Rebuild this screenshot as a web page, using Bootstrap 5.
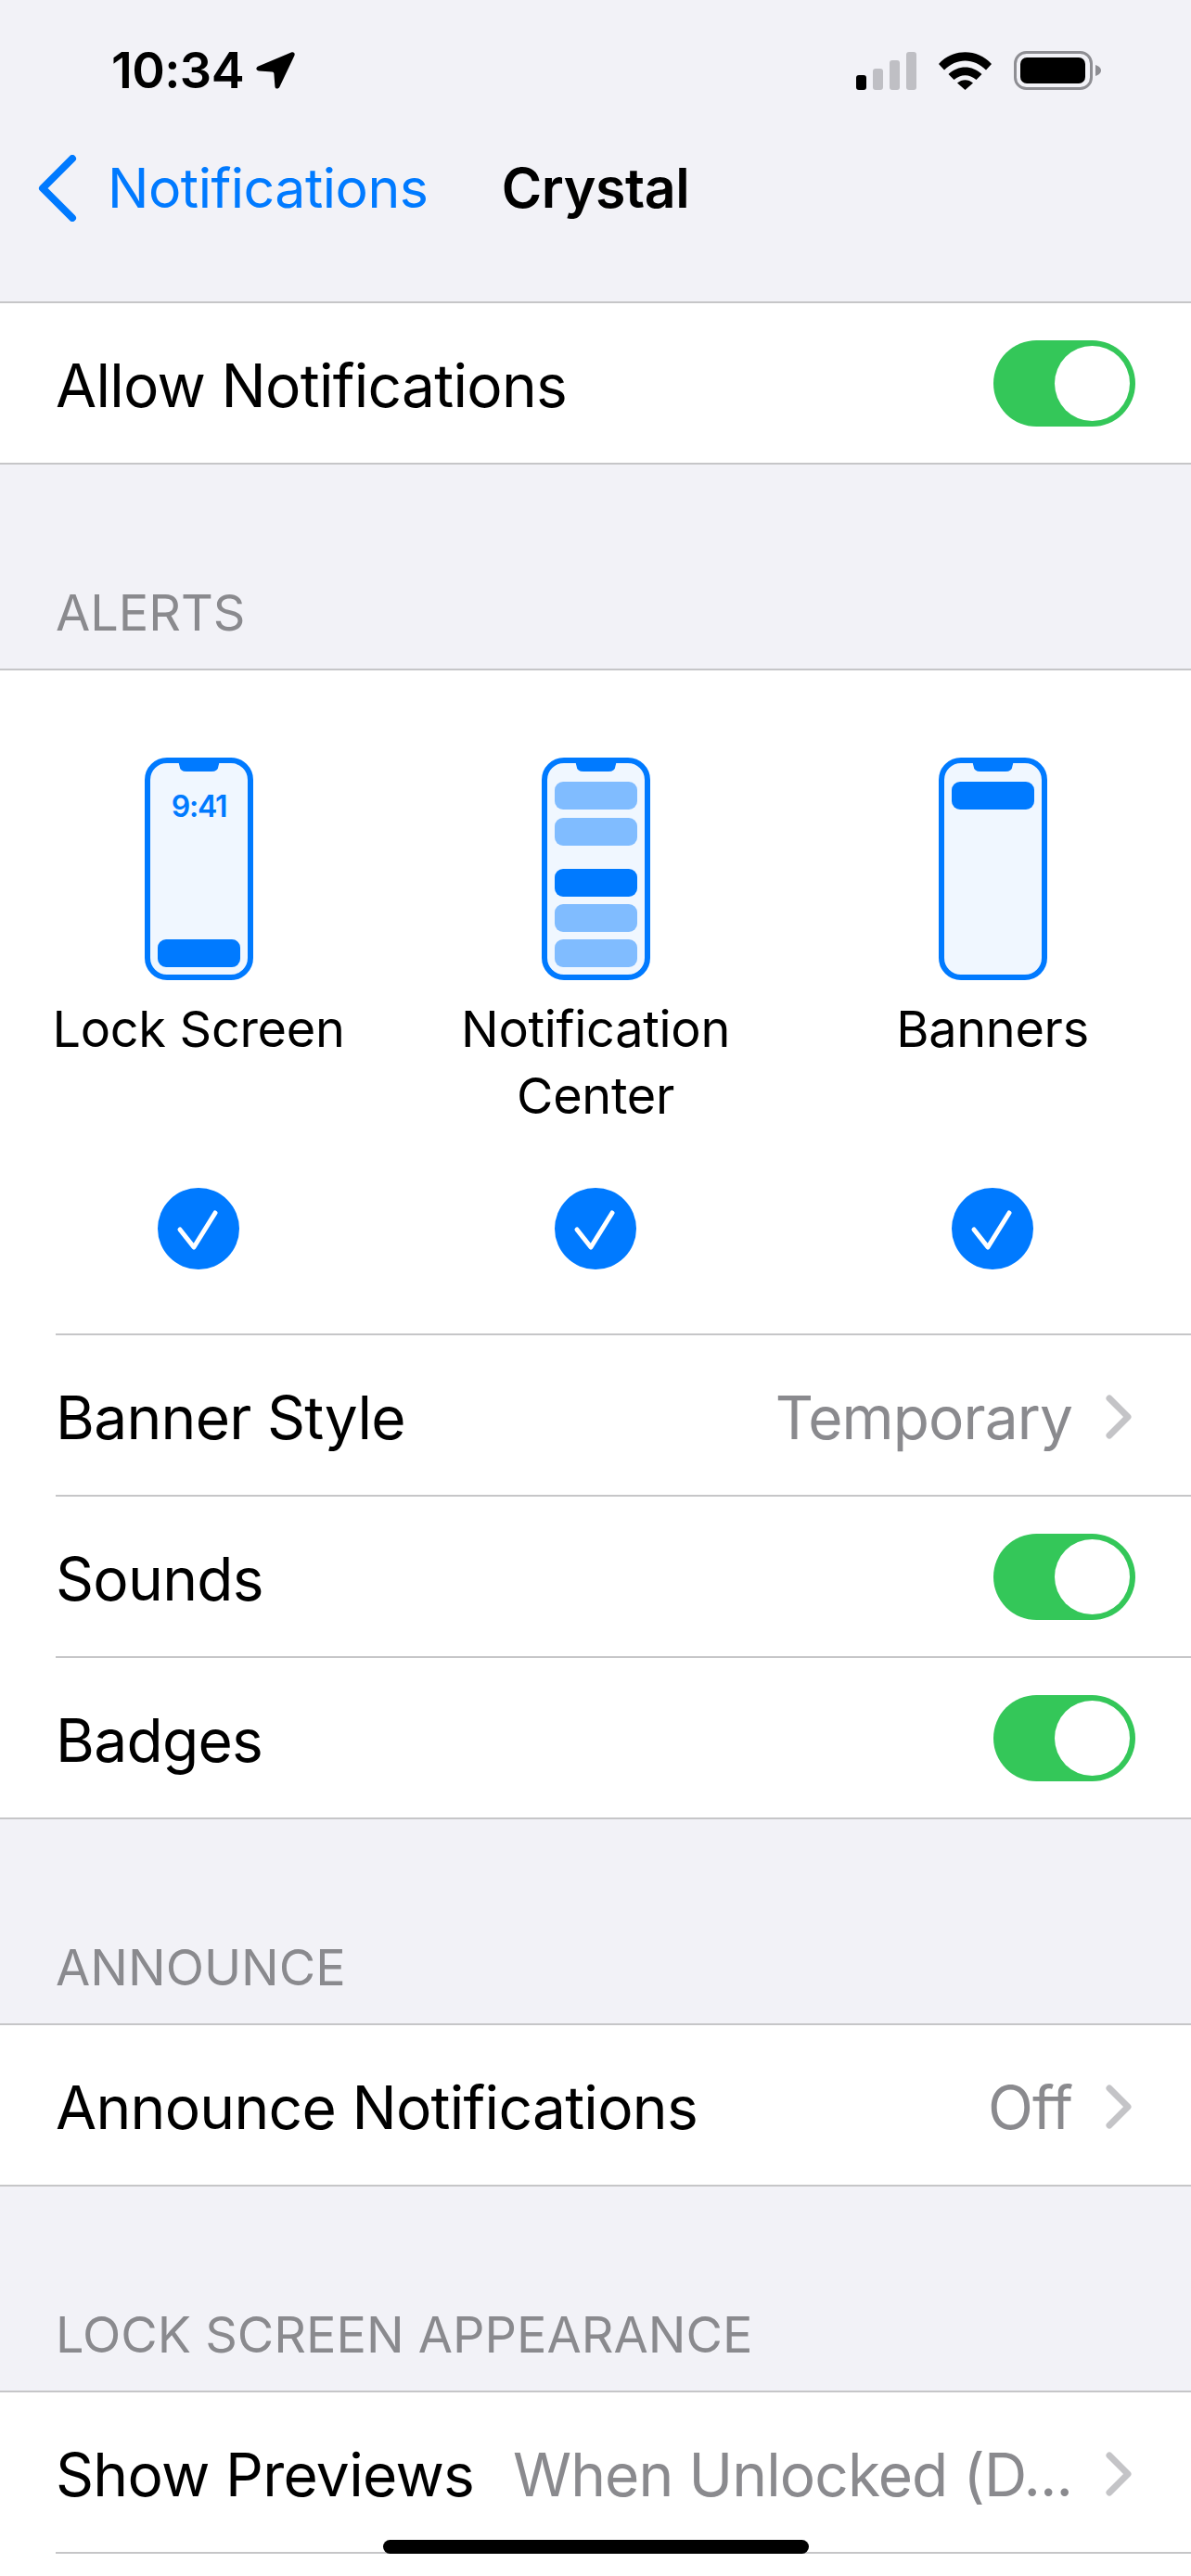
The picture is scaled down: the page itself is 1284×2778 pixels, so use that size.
<!DOCTYPE html>
<html lang="en">
<head>
  <meta charset="UTF-8" />
  <meta name="viewport" content="width=device-width, initial-scale=1.0"/>
  <title>Crystal Notifications</title>
  <link href="https://cdn.jsdelivr.net/npm/bootstrap@5.3.0/dist/css/bootstrap.min.css" rel="stylesheet"/>
  <style>
    html, body { height: 2778px; overflow: hidden; }
    body {
      background: #f2f2f7;
      font-family: Inter, "Liberation Sans", sans-serif;
      color: #000;
      width: 1284px;
      position: relative;
    }

    /* top area */
    .top-area { height: 327px; padding-top: 50px; border-bottom: 2px solid #c6c6c8; }
    .status-row { height: 52px; padding: 0 97px 0 120px; }
    .status-time { font-size: 54px; font-weight: 600; line-height: 52px; letter-spacing: -0.6px; }
    .status-arrow { margin-left: 13px; }
    .nav-row { height: 96px; margin-top: 53px; }
    .nav-side { flex: 1 1 0; padding-left: 41px; gap: 33px; }
    .nav-back { color: #007aff; font-size: 59px; line-height: 96px; letter-spacing: -0.5px; }
    .nav-title { font-size: 59px; font-weight: 600; line-height: 96px; letter-spacing: -0.4px; }

    /* settings rows */
    .white-block { background: #fff; border-bottom: 2px solid #c6c6c8; }
    .white-block.head-line { border-top: 2px solid #c6c6c8; }
    .white-block.open-end { border-bottom: 0; }
    .set-row { height: 172px; padding-right: 60px; font-size: 64px; letter-spacing: -0.7px; }
    .row-wrap { padding-left: 60px; }
    .row-wrap + .row-wrap .set-row,
    .sep-top { height: 174px; border-top: 2px solid #c6c6c8; }
    .row-text { padding-top: 6px; }
    .row-value { color: #8a8a8e; letter-spacing: -0.9px; }
    .row-chevron { margin: -2px 4px 0 36px; }

    .sec-head {
      height: 220px;
      padding: 0 0 29px 60px;
      color: #8a8a8e;
      font-size: 54px;
      line-height: 62px;
    }

    /* switch */
    .ios-switch {
      width: 153px;
      height: 93px;
      background: #34c759;
      border-radius: 47px;
      padding: 6px;
    }
    .ios-knob { width: 81px; height: 81px; background: #fff; border-radius: 50%; }

    /* alert style columns */
    .alert-cols { padding: 94px 0 69px; }
    .alert-label { margin-top: 17px; height: 142px; font-size: 54px; line-height: 72px; letter-spacing: -0.3px; }
    .alert-check { margin-top: 65px; }
    .phone-clock { font-family: Inter, sans-serif; font-size: 32px; font-weight: 600; letter-spacing: -1.2px; fill: #007aff; }

    .row-wrap + .row-wrap .last-block { height: 26px; }
    .home-bar {
      position: absolute;
      left: 413px;
      top: 2739px;
      width: 459px;
      height: 15px;
      border-radius: 8px;
      background: #000;
    }
  </style>
</head>
<body>
  <div class="top-area">
    <div class="status-row d-flex align-items-center justify-content-between">
      <div class="d-flex align-items-center">
        <span class="status-time">10:34</span>
        <svg class="status-arrow" width="42" height="40" viewBox="0 0 42 40"><path d="M38 0.6 C40.6 -0.4 42.4 1.4 41.4 4 L25.5 37.5 C24 40.6 20.6 40.2 20.4 37 L19.4 23.6 C19.3 22.4 18.6 21.7 17.4 21.6 L3 20.4 C-0.2 20.1 -0.6 16.8 2.4 15.4 Z" fill="#000"/></svg>
      </div>
      <div class="d-flex align-items-center">
        <svg width="65" height="41" viewBox="0 0 65 41" class="me-4">
          <rect x="0" y="25" width="11" height="16" rx="3" fill="#000"/>
          <rect x="18" y="18" width="11" height="23" rx="3" fill="#bfbfc4"/>
          <rect x="36" y="9" width="11" height="32" rx="3" fill="#bfbfc4"/>
          <rect x="54" y="0" width="11" height="41" rx="3" fill="#bfbfc4"/>
        </svg>
        <svg width="57" height="41" viewBox="0 0 57 41" class="me-4">
          <path d="M0 13 C15 -4 42 -4 57 13 L51 19.5 C38 6 19 6 6 19.5 Z" fill="#000"/>
          <path d="M10.5 24 C21 14 36 14 46.5 24 L40.5 30 C33 23.5 24 23.5 16.5 30 Z" fill="#000"/>
          <path d="M20 33.5 C25 29 32 29 37 33.5 L28.5 41 Z" fill="#000"/>
        </svg>
        <svg width="94" height="42" viewBox="0 0 94 42">
          <rect x="1.5" y="1.5" width="82" height="39" rx="12" fill="none" stroke="#8e8e93" stroke-width="3"/>
          <rect x="7" y="7" width="70" height="28" rx="7" fill="#000"/>
          <path d="M88 15 C91 16 94 18 94 21 C94 24 91 26 88 27 Z" fill="#8e8e93"/>
        </svg>
      </div>
    </div>
    <div class="nav-row d-flex align-items-center">
      <div class="nav-side d-flex align-items-center">
        <svg width="42" height="72" viewBox="0 0 42 72"><path d="M37 4 L5 36 L37 68" fill="none" stroke="#007aff" stroke-width="8" stroke-linecap="round" stroke-linejoin="round"/></svg>
        <span class="nav-back">Notifications</span>
      </div>
      <div class="nav-title">Crystal</div>
      <div class="nav-side"></div>
    </div>
  </div>

  <div class="white-block">
    <div class="row-wrap">
      <div class="set-row d-flex align-items-center justify-content-between">
        <span class="row-text">Allow Notifications</span>
        <span class="ios-switch d-flex justify-content-end"><span class="ios-knob"></span></span>
      </div>
    </div>
  </div>

  <div class="sec-head d-flex align-items-end">ALERTS</div>
  <div class="white-block head-line">
    <div class="row g-0 text-center alert-cols">
      <div class="col-4">
        <svg class="d-block mx-auto" width="117" height="240" viewBox="0 0 117 240">
          <rect x="3" y="3" width="111" height="234" rx="21" fill="#f0f7ff" stroke="#007aff" stroke-width="6"/>
          <path d="M36 3 H81 L79.5 9 Q79 15 72 15 H45 Q38 15 37.5 9 Z" fill="#007aff"/>
          <text x="58.5" y="64" text-anchor="middle" class="phone-clock">9:41</text>
          <rect x="14" y="196" width="89" height="30" rx="9" fill="#007aff"/>
        </svg>
        <div class="alert-label">Lock Screen</div>
        <svg class="alert-check d-block mx-auto" width="88" height="88" viewBox="0 0 88 88">
          <circle cx="44" cy="44" r="44" fill="#007aff"/>
          <path d="M24 45 L39 64 L62 27" fill="none" stroke="#fff" stroke-width="5" stroke-linecap="round" stroke-linejoin="round"/>
        </svg>
      </div>
      <div class="col-4">
        <svg class="d-block mx-auto" width="117" height="240" viewBox="0 0 117 240">
          <rect x="3" y="3" width="111" height="234" rx="21" fill="#f0f7ff" stroke="#007aff" stroke-width="6"/>
          <path d="M36 3 H81 L79.5 9 Q79 15 72 15 H45 Q38 15 37.5 9 Z" fill="#007aff"/>
          <rect x="14" y="26" width="89" height="30" rx="9" fill="#80bcff"/>
          <rect x="14" y="65" width="89" height="30" rx="9" fill="#80bcff"/>
          <rect x="14" y="120" width="89" height="30" rx="9" fill="#007aff"/>
          <rect x="14" y="158" width="89" height="30" rx="9" fill="#80bcff"/>
          <rect x="14" y="196" width="89" height="30" rx="9" fill="#80bcff"/>
        </svg>
        <div class="alert-label">Notification<br>Center</div>
        <svg class="alert-check d-block mx-auto" width="88" height="88" viewBox="0 0 88 88">
          <circle cx="44" cy="44" r="44" fill="#007aff"/>
          <path d="M24 45 L39 64 L62 27" fill="none" stroke="#fff" stroke-width="5" stroke-linecap="round" stroke-linejoin="round"/>
        </svg>
      </div>
      <div class="col-4">
        <svg class="d-block mx-auto" width="117" height="240" viewBox="0 0 117 240">
          <rect x="3" y="3" width="111" height="234" rx="21" fill="#f0f7ff" stroke="#007aff" stroke-width="6"/>
          <path d="M36 3 H81 L79.5 9 Q79 15 72 15 H45 Q38 15 37.5 9 Z" fill="#007aff"/>
          <rect x="14" y="26" width="89" height="30" rx="9" fill="#007aff"/>
        </svg>
        <div class="alert-label">Banners</div>
        <svg class="alert-check d-block mx-auto" width="88" height="88" viewBox="0 0 88 88">
          <circle cx="44" cy="44" r="44" fill="#007aff"/>
          <path d="M24 45 L39 64 L62 27" fill="none" stroke="#fff" stroke-width="5" stroke-linecap="round" stroke-linejoin="round"/>
        </svg>
      </div>
    </div>
    <div class="row-wrap">
      <div class="set-row sep-top d-flex align-items-center justify-content-between">
        <span class="row-text">Banner Style</span>
        <span class="row-text d-flex align-items-center">
          <span class="row-value">Temporary</span>
          <svg class="row-chevron" width="28" height="48" viewBox="0 0 28 48"><path d="M4 4 L24 24 L4 44" fill="none" stroke="#c4c4c7" stroke-width="7" stroke-linecap="round" stroke-linejoin="round"/></svg>
        </span>
      </div>
    </div>
    <div class="row-wrap">
      <div class="set-row d-flex align-items-center justify-content-between">
        <span class="row-text">Sounds</span>
        <span class="ios-switch d-flex justify-content-end"><span class="ios-knob"></span></span>
      </div>
    </div>
    <div class="row-wrap">
      <div class="set-row d-flex align-items-center justify-content-between">
        <span class="row-text">Badges</span>
        <span class="ios-switch d-flex justify-content-end"><span class="ios-knob"></span></span>
      </div>
    </div>
  </div>

  <div class="sec-head d-flex align-items-end">ANNOUNCE</div>
  <div class="white-block head-line">
    <div class="row-wrap">
      <div class="set-row d-flex align-items-center justify-content-between">
        <span class="row-text">Announce Notifications</span>
        <span class="row-text d-flex align-items-center">
          <span class="row-value">Off</span>
          <svg class="row-chevron" width="28" height="48" viewBox="0 0 28 48"><path d="M4 4 L24 24 L4 44" fill="none" stroke="#c4c4c7" stroke-width="7" stroke-linecap="round" stroke-linejoin="round"/></svg>
        </span>
      </div>
    </div>
  </div>

  <div class="sec-head d-flex align-items-end">LOCK SCREEN APPEARANCE</div>
  <div class="white-block head-line open-end">
    <div class="row-wrap">
      <div class="set-row d-flex align-items-center justify-content-between">
        <span class="row-text text-nowrap">Show Previews</span>
        <span class="row-text d-flex align-items-center">
          <span class="row-value text-nowrap">When Unlocked (D...</span>
          <svg class="row-chevron" width="28" height="48" viewBox="0 0 28 48"><path d="M4 4 L24 24 L4 44" fill="none" stroke="#c4c4c7" stroke-width="7" stroke-linecap="round" stroke-linejoin="round"/></svg>
        </span>
      </div>
    </div>
    <div class="row-wrap">
      <div class="set-row last-block"></div>
    </div>
  </div>

  <div class="home-bar"></div>

  <script src="https://cdn.jsdelivr.net/npm/bootstrap@5.3.0/dist/js/bootstrap.bundle.min.js"></script>
</body>
</html>
